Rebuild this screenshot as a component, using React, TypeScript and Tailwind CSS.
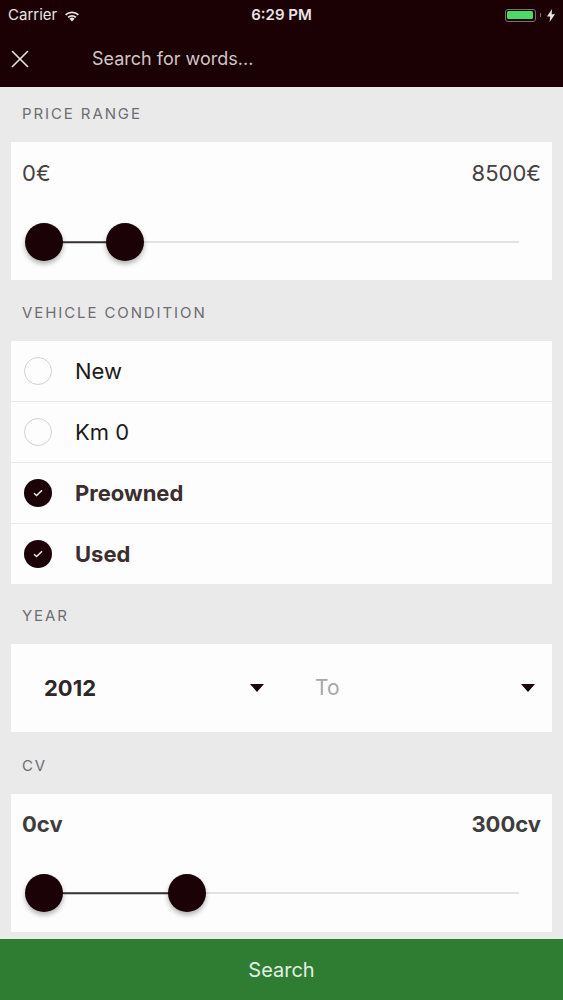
import { X } from "lucide-react";

const font = { fontFamily: "Inter, 'Noto Sans', sans-serif" };

function StatusBar() {
  return (
    <div className="relative flex h-[30px] items-center px-2 text-[15px] text-[#e9e4e4]">
      <div className="flex items-center gap-[6px]">
        <span>Carrier</span>
        <svg width="18" height="13" viewBox="0 0 16 12" fill="#e9e4e4">
          <path d="M8 11.5 5.6 9a3.4 3.4 0 0 1 4.8 0z" />
          <path d="M3.8 7.2a6 6 0 0 1 8.4 0l-1.2 1.2a4.3 4.3 0 0 0-6 0z" />
          <path d="M1.5 4.9a9.2 9.2 0 0 1 13 0l-1.2 1.2a7.5 7.5 0 0 0-10.6 0z" />
        </svg>
      </div>
      <span className="absolute left-1/2 -translate-x-1/2 font-semibold">6:29 PM</span>
      <div className="ml-auto flex items-center gap-[4px]">
        <div className="flex h-[13px] w-[31px] items-center rounded-[3px] border border-[#7a7070] p-[1.5px]">
          <div className="h-full w-full rounded-[1.5px] bg-[#4cd964]" />
        </div>
        <div className="h-[4px] w-[1.5px] bg-[#7a7070]" />
        <svg width="8" height="13" viewBox="0 0 8 13" fill="#e9e4e4" className="ml-[2px]">
          <path d="M5 0 0 7.5h3.2L2.6 13 8 5.2H4.7z" />
        </svg>
      </div>
    </div>
  );
}

function SectionLabel({ text, h }: { text: string; h: string }) {
  return (
    <div className={`flex items-center px-[22px] text-[15px] tracking-[1.9px] text-[#6d6d72] ${h}`}>
      {text}
    </div>
  );
}

function RangeSlider({ low, high }: { low: number; high: number }) {
  // track runs from x=43 to x=519 on the page
  return (
    <div className="relative mx-[14px] h-[40px]">
      <div className="absolute left-[18px] right-[19px] top-1/2 h-px -translate-y-1/2 bg-[#c7c7c7]" />
      <div
        className="absolute top-1/2 h-[1.5px] -translate-y-1/2 bg-[#3a3333]"
        style={{ left: 18 + low, width: high - low }}
      />
      {[low, high].map((x, i) => (
        <div
          key={i}
          className="absolute top-1/2 h-[38px] w-[38px] -translate-y-1/2 rounded-full bg-[#1a0206] shadow-[0_3px_5px_rgba(0,0,0,0.3)]"
          style={{ left: x }}
        />
      ))}
    </div>
  );
}

function Check({ on }: { on: boolean }) {
  if (!on) {
    return <div className="h-[28px] w-[28px] rounded-full border-[1.5px] border-[#d2d2d2]" />;
  }
  return (
    <div className="flex h-[28px] w-[28px] items-center justify-center rounded-full bg-[#1c0307]">
      <svg width="12" height="10" viewBox="0 0 12 10" fill="none" stroke="#f2eded" strokeWidth="1.4">
        <path d="M2 5.2 4.6 7.6 10 2.2" />
      </svg>
    </div>
  );
}

function Caret() {
  return (
    <svg width="14" height="8" viewBox="0 0 14 8" fill="#1a0408">
      <path d="M0 0h14L7 8z" />
    </svg>
  );
}

export default function App() {
  const conditions = [
    { label: "New", on: false },
    { label: "Km 0", on: false },
    { label: "Preowned", on: true },
    { label: "Used", on: true },
  ];

  return (
    <div className="flex h-[1000px] w-[563px] flex-col overflow-hidden bg-[#eaeaeb]" style={font}>
      {/* header */}
      <div className="h-[87px] bg-[#1c0104]">
        <StatusBar />
        <div className="flex h-[57px] items-center">
          <div className="flex w-[92px] items-center pl-[5px]">
            <X size={30} strokeWidth={1.3} color="#e6e0e0" />
          </div>
          <span className="text-[18px] text-[#cfc6c6]">Search for words...</span>
        </div>
      </div>

      {/* price range */}
      <SectionLabel text="PRICE RANGE" h="h-[55px]" />
      <div className="mx-[11px] h-[138px] bg-[#fefdfe] pt-[18px]">
        <div className="flex justify-between px-[11px] text-[22px] leading-[26px] text-[#454242]">
          <span>0€</span>
          <span>8500€</span>
        </div>
        <div className="mt-[36px]">
          <RangeSlider low={0} high={81} />
        </div>
      </div>

      {/* vehicle condition */}
      <SectionLabel text="VEHICLE CONDITION" h="h-[61px] pt-[5px]" />
      <div className="mx-[11px] flex flex-col gap-px">
        {conditions.map((c) => (
          <div key={c.label} className="flex h-[60px] items-center bg-[#fefdfe] pl-[13px]">
            <Check on={c.on} />
            <span
              className={`ml-[23px] text-[22px] ${c.on ? "font-bold text-[#3a2e2f]" : "text-[#1c1a1a]"}`}
            >
              {c.label}
            </span>
          </div>
        ))}
      </div>

      {/* year */}
      <SectionLabel text="YEAR" h="h-[60px] pt-[4px]" />
      <div className="mx-[11px] flex h-[88px] items-center bg-[#fefdfe]">
        <div className="flex w-[253px] items-center pl-[33px]">
          <span className="text-[22px] font-bold text-[#2e2627]">2012</span>
          <span className="ml-auto"><Caret /></span>
        </div>
        <div className="flex flex-1 items-center pl-[51px] pr-[17px]">
          <span className="text-[21px] text-[#a9a7a8]">To</span>
          <span className="ml-auto"><Caret /></span>
        </div>
      </div>

      {/* cv */}
      <SectionLabel text="CV" h="h-[62px] pt-[6px]" />
      <div className="mx-[11px] h-[138px] bg-[#fefdfe] pt-[17px]">
        <div className="flex justify-between px-[11px] text-[22px] font-bold leading-[26px] text-[#3f3c3d]">
          <span>0cv</span>
          <span>300cv</span>
        </div>
        <div className="mt-[36px]">
          <RangeSlider low={0} high={143} />
        </div>
      </div>

      {/* search button */}
      <div className="mt-auto flex h-[61px] items-center justify-center bg-[#2e7d33] text-[20px] text-[#e3efe2]">
        Search
      </div>
    </div>
  );
}
